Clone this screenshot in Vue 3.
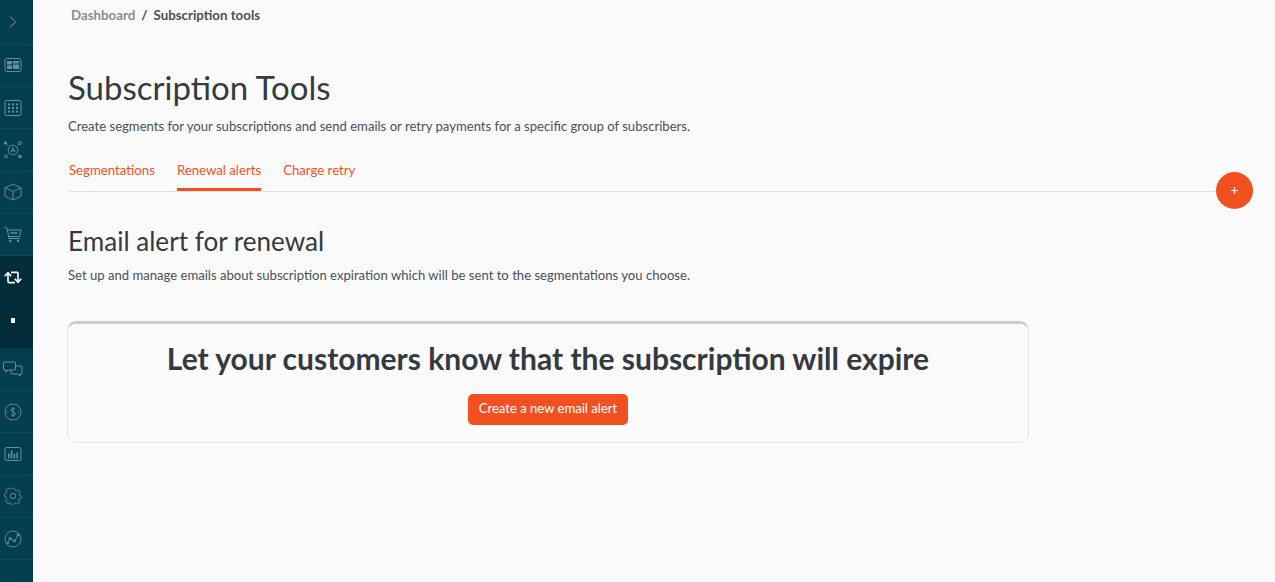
<template>
  <div class="page">
    <aside class="sidebar">
      <div class="side-item toggle">
        <svg width="20" height="20" viewBox="0 0 20 20" fill="none" stroke="#7f9fa8" stroke-width="1"><path d="M7 4.5 12.5 10 7 15.5" /></svg>
      </div>
      <div class="side-item">
        <svg width="18" height="16" viewBox="0 0 18 16" fill="none" stroke="#6a8e99"><rect x="1" y="1.5" width="16" height="13" rx="2" /><rect x="3" y="4" width="5" height="3.5" fill="#6a8e99" stroke="none" /><rect x="3" y="8.5" width="5" height="3.5" fill="#6a8e99" stroke="none" /><rect x="9" y="4" width="6" height="2.5" fill="#6a8e99" stroke="none" /><rect x="9" y="7.5" width="6" height="4.5" fill="#6a8e99" stroke="none" /></svg>
      </div>
      <div class="side-item">
        <svg width="18" height="16" viewBox="0 0 18 16" fill="none" stroke="#6a8e99"><rect x="1" y="0.5" width="16" height="15" rx="1.5" /><g fill="#6a8e99" stroke="none"><rect x="4" y="3.5" width="2" height="2" /><rect x="8" y="3.5" width="2" height="2" /><rect x="12" y="3.5" width="2" height="2" /><rect x="4" y="7" width="2" height="2" /><rect x="8" y="7" width="2" height="2" /><rect x="12" y="7" width="2" height="2" /><rect x="4" y="10.5" width="2" height="2" /><rect x="8" y="10.5" width="2" height="2" /><rect x="12" y="10.5" width="2" height="2" /></g></svg>
      </div>
      <div class="side-item">
        <svg width="20" height="18" viewBox="0 0 20 18" fill="none" stroke="#6a8e99" stroke-width="0.9"><circle cx="10" cy="9" r="4.8" /><path d="M8 11.2 10 6.6l2 4.6M8.7 9.8h2.6" /><circle cx="2.5" cy="2" r="1.3" fill="#6a8e99" /><circle cx="17" cy="2" r="1.5" /><circle cx="3" cy="15.5" r="1.5" /><circle cx="17" cy="15.5" r="1.3" fill="#6a8e99" /><path d="M3.5 3 6.5 6M15.8 3 13.5 6M4 14.5 6.5 12M16 14.5 13.5 12" stroke-dasharray="1 1" /></svg>
      </div>
      <div class="side-item">
        <svg width="18" height="18" viewBox="0 0 18 18" fill="none" stroke="#6a8e99" stroke-width="0.9"><path d="M9 1 17 4.8v8.4L9 17l-8-3.8V4.8Z" /><path d="M1 4.8 9 8.5l8-3.7M9 8.5V17" /></svg>
      </div>
      <div class="side-item">
        <svg width="18" height="16" viewBox="0 0 18 16" fill="none" stroke="#6a8e99"><path d="M0.5 0.5 3 1.2 5 11.5h11" /><path d="M3.4 3H17l-1.4 6.5H4.8" /><path d="M6.5 6h7" stroke-width="1.4" /><circle cx="6.3" cy="14" r="1.2" fill="#6a8e99" stroke="none" /><circle cx="14" cy="14" r="1.2" fill="#6a8e99" stroke="none" /></svg>
      </div>
      <div class="side-group">
        <div class="side-item plain">
          <svg width="18" height="13" viewBox="0 0 18 13" fill="none" stroke="#fff" stroke-width="1.6"><path d="M0.8 5.2 4 1.6l3.2 3.6" /><path d="M4 2.2v8.4c0 .6.4 1 1 1h6" /><path d="M17.2 7.8 14 11.4l-3.2-3.6" /><path d="M14 10.8V2.4c0-.6-.4-1-1-1H7" /></svg>
        </div>
        <div class="side-sub"><span class="dot"></span></div>
      </div>
      <div class="side-item">
        <svg width="20" height="16" viewBox="0 0 20 16" fill="none" stroke="#6a8e99"><path d="M1.5 1h10a1 1 0 0 1 1 1v6a1 1 0 0 1-1 1H5l-2 2V9H1.5a1 1 0 0 1-1-1V2a1 1 0 0 1 1-1Z" /><path d="M12.5 5h5.5a1 1 0 0 1 1 1v6a1 1 0 0 1-1 1h-1v2l-2-2H9a1 1 0 0 1-1-1V9" /></svg>
      </div>
      <div class="side-item">
        <svg width="18" height="18" viewBox="0 0 18 18" fill="none" stroke="#6a8e99" stroke-width="0.9"><circle cx="9" cy="9" r="8" /><path d="M11.2 6.4C10.7 5.4 7 5 7 7c0 2 4.4 1.6 4.4 4 0 2-3.8 1.7-4.6.6M9 4v10M2.8 9h1.6M13.6 9h1.6" /></svg>
      </div>
      <div class="side-item">
        <svg width="18" height="16" viewBox="0 0 18 16" fill="none" stroke="#6a8e99"><rect x="1" y="1.5" width="16" height="13" rx="1.5" /><g fill="#6a8e99" stroke="none"><rect x="4" y="7.5" width="1.6" height="5" /><rect x="6.8" y="4.5" width="1.6" height="8" /><rect x="9.6" y="8" width="1.6" height="4.5" /><rect x="12.4" y="6.5" width="1.6" height="6" /></g></svg>
      </div>
      <div class="side-item">
        <svg width="18" height="18" viewBox="0 0 18 18" fill="none" stroke="#6a8e99" stroke-width="0.9"><path d="M7.4 1h3.2l.5 2.3 1.9.8 2-1.3 2 2.3-1.3 2 .5 1.9 1.8.6v2.8l-2 .5-.7 1.9 1.2 2-2.3 1.9-1.9-1.2-1.9.7-.5 1.8H7.4l-.5-2-1.9-.7-2 1.2L.9 14.4l1.2-2-.7-1.9L-.4 10V7.2l2-.5.7-1.9-1.3-2 2.3-2 2 1.3 1.9-.7Z" transform="translate(0.9 0.3) scale(0.9)" /><rect x="6.5" y="6.5" width="5" height="5" rx="1.6" /></svg>
      </div>
      <div class="side-item">
        <svg width="18" height="18" viewBox="0 0 18 18" fill="none" stroke="#6a8e99" stroke-width="0.9"><circle cx="9" cy="9" r="8" /><path d="M3.5 13 6 8.5l4.5 2.5 3.5-6" /><circle cx="3.5" cy="13" r="1" /><circle cx="6" cy="8.5" r="1" fill="#6a8e99" /><circle cx="10.5" cy="11" r="1" /><circle cx="14" cy="5" r="1" fill="#6a8e99" /></svg>
      </div>
    </aside>

    <main class="main">
      <nav class="breadcrumb">
        <span class="crumb-link">Dashboard</span>
        <span class="crumb-sep">/</span>
        <span class="crumb-current">Subscription tools</span>
      </nav>

      <h1>Subscription Tools</h1>
      <p class="lead">Create segments for your subscriptions and send emails or retry payments for a specific group of subscribers.</p>

      <div class="tabs">
        <span v-for="tab in tabs" :key="tab" class="tab" :class="{ active: tab === activeTab }">{{ tab }}</span>
        <button class="fab">+</button>
      </div>

      <h2>Email alert for renewal</h2>
      <p class="sub">Set up and manage emails about subscription expiration which will be sent to the segmentations you choose.</p>

      <section class="card">
        <h3>Let your customers know that the subscription will expire</h3>
        <button class="primary">Create a new email alert</button>
      </section>
    </main>
  </div>
</template>

<script setup>
const tabs = ['Segmentations', 'Renewal alerts', 'Charge retry']
const activeTab = 'Renewal alerts'
</script>

<style>
html, body {
  margin: 0;
  background: #fafafa;
}
</style>

<style scoped>
.page {
  display: flex;
  height: 582px;
  overflow: hidden;
  background: #fafafa;
  font-family: "Lato", "Noto Sans", sans-serif;
  color: #343a40;
}

.sidebar {
  width: 33px;
  flex-shrink: 0;
  background: #023e4f;
  display: flex;
  flex-direction: column;
}

.side-item {
  height: 42.4px;
  flex-shrink: 0;
  box-sizing: border-box;
  padding-right: 7px;
  display: flex;
  align-items: center;
  justify-content: center;
  border-bottom: 1px solid #0f4a5a;
}

.side-item.toggle {
  height: 44.5px;
}

.side-item.plain {
  border-bottom: none;
}

.side-group {
  height: 92px;
  flex-shrink: 0;
  background: #012c3a;
}

.side-sub {
  height: 49px;
  box-sizing: border-box;
  padding: 0 7px 6px 0;
  display: flex;
  align-items: center;
  justify-content: center;
}

.dot {
  width: 4px;
  height: 5px;
  background: #fff;
}

.main {
  flex: 1;
  padding-left: 35px;
  min-width: 0;
}

.breadcrumb {
  margin: 7px 0 0 3px;
  font-size: 13.3px;
  line-height: 16px;
  font-weight: 700;
  display: flex;
  gap: 6px;
}

.crumb-link {
  color: #868e96;
}

.crumb-current,
.crumb-sep {
  color: #495057;
}

h1 {
  margin: 39px 0 0;
  font-size: 33px;
  line-height: 50px;
  font-weight: 400;
  color: #343a40;
}

.lead {
  margin: 5px 0 0;
  font-size: 13.1px;
  line-height: 18px;
  color: #495057;
}

.tabs {
  position: relative;
  margin: 18px 0 0 1px;
  width: 1171px;
  height: 38px;
  border-bottom: 1px solid #e0e0e0;
  display: flex;
  gap: 22px;
}

.tab {
  height: 38px;
  box-sizing: border-box;
  line-height: 34px;
  font-size: 13.2px;
  color: #f4511e;
}

.tab.active {
  border-bottom: 3px solid #f35022;
}

.fab {
  position: absolute;
  left: 1147px;
  top: 19px;
  width: 37px;
  height: 37px;
  border: none;
  border-radius: 50%;
  background: #f35022;
  color: #fff;
  font-size: 14px;
  font-family: inherit;
  padding: 0 0 2px;
}

h2 {
  margin: 33px 0 0;
  font-size: 26.1px;
  line-height: 32px;
  font-weight: 400;
  color: #343a40;
}

.sub {
  margin: 9px 0 0;
  font-size: 13.1px;
  line-height: 18px;
  color: #495057;
}

.card {
  margin-top: 37px;
  width: 962px;
  height: 122px;
  box-sizing: border-box;
  border: 1px solid #e6e6e6;
  border-top: 3px solid #cccccc;
  border-radius: 9px;
  display: flex;
  flex-direction: column;
  align-items: center;
  margin-left: -1px;
}

h3 {
  margin: 16px 0 0;
  font-size: 30px;
  line-height: 36px;
  font-weight: 700;
  color: #343a40;
}

.primary {
  margin-top: 18px;
  height: 31px;
  width: 160px;
  border: none;
  border-radius: 5px;
  background: #f35022;
  color: #fff;
  font-size: 13.1px;
  font-family: inherit;
  padding: 0 0 3px;
}
</style>
